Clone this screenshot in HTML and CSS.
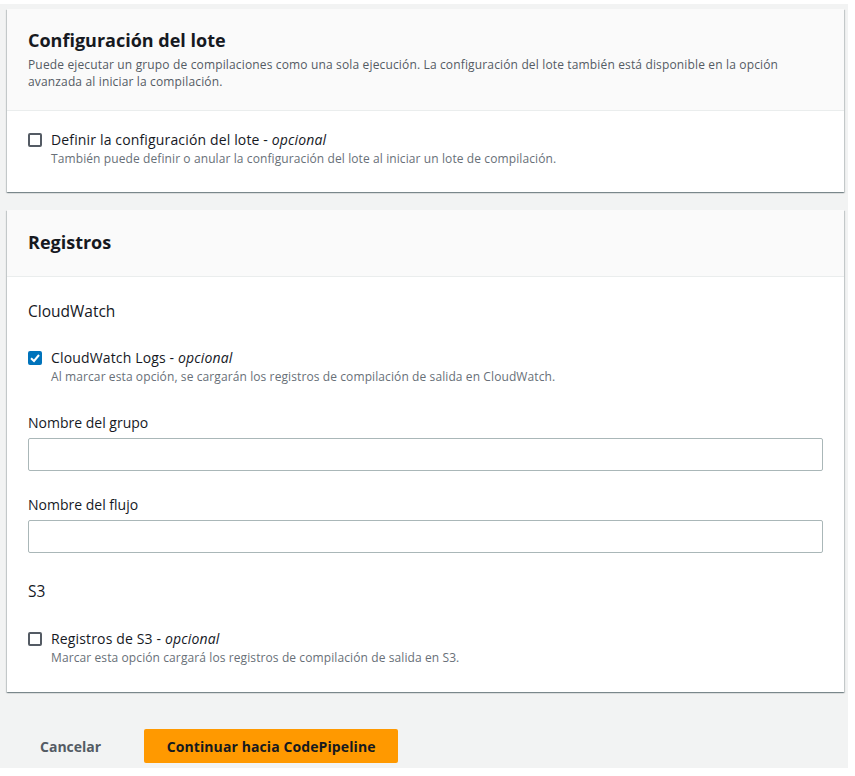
FILE: index.html
```html
<!DOCTYPE html>
<html lang="es">
<head>
<meta charset="utf-8">
<link rel="stylesheet" href="styles.css">
</head>
<body>
<div class="page">
  <section class="card">
    <header class="card-head">
      <h2 class="title">Configuración del lote</h2>
      <p class="desc">Puede ejecutar un grupo de compilaciones como una sola ejecución. La configuración del lote también está disponible en la opción avanzada al iniciar la compilación.</p>
    </header>
    <div class="card-body body-1">
      <div class="check">
        <span class="box"></span>
        <div class="check-text">
          <div class="check-label">Definir la configuración del lote - <i>opcional</i></div>
          <div class="check-desc">También puede definir o anular la configuración del lote al iniciar un lote de compilación.</div>
        </div>
      </div>
    </div>
  </section>

  <section class="card card-2">
    <header class="card-head head-2">
      <h2 class="title">Registros</h2>
    </header>
    <div class="card-body body-2">
      <div class="group-title">CloudWatch</div>
      <div class="check check-cw">
        <span class="box checked"><svg viewBox="0 0 14 14" width="14" height="14"><path d="M3 7.2 L6 10 L11 4" fill="none" stroke="#fff" stroke-width="2"/></svg></span>
        <div class="check-text">
          <div class="check-label">CloudWatch Logs - <i>opcional</i></div>
          <div class="check-desc">Al marcar esta opción, se cargarán los registros de compilación de salida en CloudWatch.</div>
        </div>
      </div>
      <div class="field">
        <div class="field-label">Nombre del grupo</div>
        <div class="input"></div>
      </div>
      <div class="field">
        <div class="field-label">Nombre del flujo</div>
        <div class="input"></div>
      </div>
      <div class="group-title s3">S3</div>
      <div class="check check-s3">
        <span class="box"></span>
        <div class="check-text">
          <div class="check-label">Registros de S3 - <i>opcional</i></div>
          <div class="check-desc">Marcar esta opción cargará los registros de compilación de salida en S3.</div>
        </div>
      </div>
    </div>
  </section>

  <div class="actions">
    <span class="btn-link">Cancelar</span>
    <span class="btn-primary">Continuar hacia CodePipeline</span>
  </div>
</div>
</body>
</html>
```

FILE: styles.css
```css
* { box-sizing: border-box; }
html, body { margin: 0; padding: 0; background: #fff; }
body {
  font-family: "Open Sans", "Noto Sans", sans-serif;
  color: #16191f;
  font-size: 14px;
}
.page {
  margin-top: 4px;
  width: 848px;
  height: 764px;
  background: #f2f3f3;
  padding: 5px 4px 0 7px;
}
.card {
  background: #fff;
  box-shadow: 0 1px 1px 0 rgba(0,28,36,.3), 1px 1px 1px 0 rgba(0,28,36,.15), -1px 1px 1px 0 rgba(0,28,36,.15);
}
.card-2 { margin-top: 18px; }
.card-head {
  background: #fafafa;
  border-bottom: 1px solid #eaeded;
  padding: 19px 20px 20px 21px;
}
.head-2 { padding: 20px 20px 22px 21px; }
.title {
  margin: 0;
  font-size: 18px;
  font-weight: 700;
  line-height: 24px;
}
.desc {
  margin: 4px 0 0;
  font-size: 12px;
  line-height: 17px;
  color: #545b64;
  letter-spacing: 0.15px;
}
.card-body { padding: 20px 20px 20px 21px; }
.body-1 { padding: 20px 20px 25px 21px; }
.check { display: flex; align-items: flex-start; }
.box {
  width: 14px; height: 14px;
  border: 2px solid #545b64;
  border-radius: 2px;
  margin-top: 2px;
  flex: none;
  background: #fff;
  display: flex;
}
.box.checked { background: #0073bb; border-color: #0073bb; }
.box.checked svg { margin: -2px; }
.check-text { margin-left: 9px; }
.check-label { font-size: 14px; line-height: 18px; letter-spacing: 0.15px; }
.check-label i { font-style: italic; }
.check-desc { font-size: 12px; line-height: 16px; color: #687078; margin-top: 2px; letter-spacing: 0.1px; }
.group-title { font-size: 15.5px; line-height: 22px; margin-top: 0; }
.check-cw { margin-top: 27px; }
.field { margin-top: 28px; }
.field + .field { margin-top: 24px; }
.field-label { font-size: 14px; line-height: 20px; margin-bottom: 5px; }
.input {
  height: 33px;
  width: 795px;
  border: 1px solid #aab7b8;
  border-radius: 2px;
}
.s3 { margin-top: 27px; }
.check-s3 { margin-top: 28px; }
.body-2 { padding: 23px 20px 26px 21px; }
.actions {
  display: flex;
  align-items: center;
  margin-top: 37px;
  padding-left: 33px;
}
.btn-link {
  font-weight: 700;
  color: #545b64;
  font-size: 14px;
  margin-right: 43px;
}
.btn-primary {
  background: #ff9900;
  border-radius: 2px;
  font-weight: 700;
  font-size: 14px;
  letter-spacing: 0.1px;
  height: 34px;
  width: 254px;
  display: flex;
  align-items: center;
  justify-content: center;
  color: #16191f;
}
```
